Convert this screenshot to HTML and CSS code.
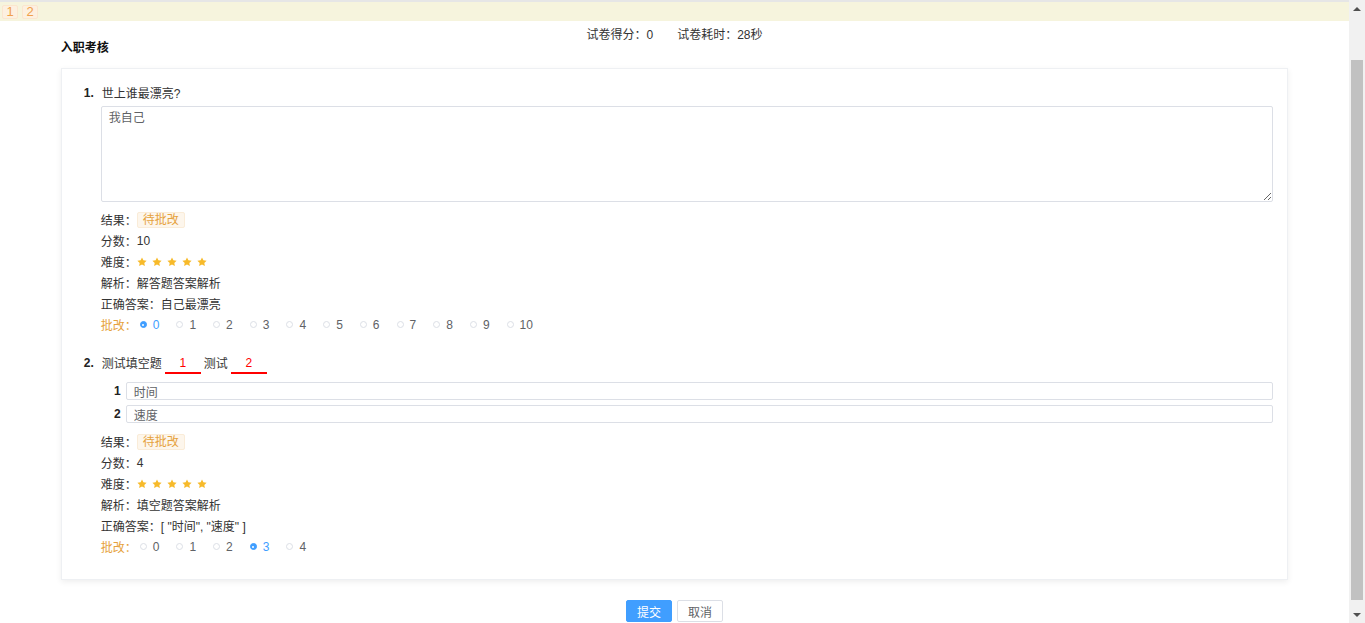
FILE: index.html
```html
<!DOCTYPE html>
<html lang="zh-CN">
<head>
<meta charset="utf-8">
<title>入职考核</title>
<link rel="stylesheet" href="styles.css">
</head>
<body>
<div class="page">
<div class="topbar">
  <span class="nav-badge">1</span>
  <span class="nav-badge">2</span>
</div>
<div class="score-line"><span class="score-item">试卷得分：0</span><span class="score-item">试卷耗时：28秒</span></div>
<div class="wrap">
  <div class="paper-title">入职考核</div>
  <div class="card">
    <div class="question">
      <div class="q-head"><span class="q-num">1.</span><span class="q-text">世上谁最漂亮?</span></div>
      <div class="q-body">
        <textarea class="answer-area" readonly>我自己</textarea>
        <div class="details">
          <div class="row"><span class="lbl">结果：</span><span class="tag">待批改</span></div>
          <div class="row"><span class="lbl">分数：</span>10</div>
          <div class="row"><span class="lbl">难度：</span><span class="stars">
            <svg class="star" viewBox="0 0 10 10"><path d="M5 0.4l1.4 2.9 3.2.4-2.3 2.2.6 3.2L5 7.6 2.1 9.1l.6-3.2L.4 3.7l3.2-.4z"/></svg>
            <svg class="star" viewBox="0 0 10 10"><path d="M5 0.4l1.4 2.9 3.2.4-2.3 2.2.6 3.2L5 7.6 2.1 9.1l.6-3.2L.4 3.7l3.2-.4z"/></svg>
            <svg class="star" viewBox="0 0 10 10"><path d="M5 0.4l1.4 2.9 3.2.4-2.3 2.2.6 3.2L5 7.6 2.1 9.1l.6-3.2L.4 3.7l3.2-.4z"/></svg>
            <svg class="star" viewBox="0 0 10 10"><path d="M5 0.4l1.4 2.9 3.2.4-2.3 2.2.6 3.2L5 7.6 2.1 9.1l.6-3.2L.4 3.7l3.2-.4z"/></svg>
            <svg class="star" viewBox="0 0 10 10"><path d="M5 0.4l1.4 2.9 3.2.4-2.3 2.2.6 3.2L5 7.6 2.1 9.1l.6-3.2L.4 3.7l3.2-.4z"/></svg>
          </span></div>
          <div class="row"><span class="lbl">解析：</span>解答题答案解析</div>
          <div class="row"><span class="lbl">正确答案：</span>自己最漂亮</div>
          <div class="row"><span class="lbl grade">批改：</span>
            <span class="radio checked"><i></i>0</span>
            <span class="radio"><i></i>1</span>
            <span class="radio"><i></i>2</span>
            <span class="radio"><i></i>3</span>
            <span class="radio"><i></i>4</span>
            <span class="radio"><i></i>5</span>
            <span class="radio"><i></i>6</span>
            <span class="radio"><i></i>7</span>
            <span class="radio"><i></i>8</span>
            <span class="radio"><i></i>9</span>
            <span class="radio"><i></i>10</span>
          </div>
        </div>
      </div>
    </div>

    <div class="question q2">
      <div class="q-head"><span class="q-num">2.</span><span class="q-text">测试填空题<span class="blank">1</span>测试<span class="blank">2</span></span></div>
      <div class="q-body">
        <div class="fill-row"><span class="fill-no">1</span><input class="fill-input" type="text" value="时间" readonly></div>
        <div class="fill-row"><span class="fill-no">2</span><input class="fill-input" type="text" value="速度" readonly></div>
        <div class="details">
          <div class="row"><span class="lbl">结果：</span><span class="tag">待批改</span></div>
          <div class="row"><span class="lbl">分数：</span>4</div>
          <div class="row"><span class="lbl">难度：</span><span class="stars">
            <svg class="star" viewBox="0 0 10 10"><path d="M5 0.4l1.4 2.9 3.2.4-2.3 2.2.6 3.2L5 7.6 2.1 9.1l.6-3.2L.4 3.7l3.2-.4z"/></svg>
            <svg class="star" viewBox="0 0 10 10"><path d="M5 0.4l1.4 2.9 3.2.4-2.3 2.2.6 3.2L5 7.6 2.1 9.1l.6-3.2L.4 3.7l3.2-.4z"/></svg>
            <svg class="star" viewBox="0 0 10 10"><path d="M5 0.4l1.4 2.9 3.2.4-2.3 2.2.6 3.2L5 7.6 2.1 9.1l.6-3.2L.4 3.7l3.2-.4z"/></svg>
            <svg class="star" viewBox="0 0 10 10"><path d="M5 0.4l1.4 2.9 3.2.4-2.3 2.2.6 3.2L5 7.6 2.1 9.1l.6-3.2L.4 3.7l3.2-.4z"/></svg>
            <svg class="star" viewBox="0 0 10 10"><path d="M5 0.4l1.4 2.9 3.2.4-2.3 2.2.6 3.2L5 7.6 2.1 9.1l.6-3.2L.4 3.7l3.2-.4z"/></svg>
          </span></div>
          <div class="row"><span class="lbl">解析：</span>填空题答案解析</div>
          <div class="row"><span class="lbl">正确答案：</span>[ "时间", "速度" ]</div>
          <div class="row"><span class="lbl grade">批改：</span>
            <span class="radio"><i></i>0</span>
            <span class="radio"><i></i>1</span>
            <span class="radio"><i></i>2</span>
            <span class="radio checked"><i></i>3</span>
            <span class="radio"><i></i>4</span>
          </div>
        </div>
      </div>
    </div>
  </div>
  <div class="actions">
    <button class="btn btn-primary" type="button">提交</button>
    <button class="btn" type="button">取消</button>
  </div>
</div>
</div>
<div class="scrollbar" aria-hidden="true">
  <span class="sb-arrow sb-up"></span>
  <span class="sb-track"><span class="sb-thumb"></span></span>
  <span class="sb-arrow sb-down"></span>
</div>
</body>
</html>
```

FILE: styles.css
```css
html, body {
  margin: 0;
  padding: 0;
}
body {
  font-family: "Liberation Sans", "Noto Sans CJK SC", sans-serif;
  font-size: 12px;
  color: #333;
  background: #fff;
  overflow: hidden;
}
.page {
  margin-right: 16px;
}
.topbar {
  height: 19px;
  border-top: 2px solid #e6e6e6;
  background: #f6f4dd;
  display: flex;
  align-items: center;
  gap: 4px;
  padding-left: 2px;
}
.nav-badge {
  width: 14px;
  height: 12px;
  line-height: 12px;
  text-align: center;
  font-size: 13px;
  color: #f0a04b;
  background: #fdf0e0;
  border: 1px solid #fbe6cf;
  border-radius: 2px;
}
.score-line {
  margin-top: 7px;
  line-height: 14px;
  text-align: center;
  color: #333;
}
.score-item + .score-item {
  margin-left: 24px;
}
.wrap {
  width: 91%;
  margin: 0 auto;
}
.paper-title {
  font-weight: bold;
  line-height: 12px;
  color: #111;
}
.card {
  margin-top: 14px;
  background: #fff;
  border: 1px solid #eef0f3;
  box-shadow: 0 2px 6px rgba(0, 0, 0, 0.07);
  padding: 15px 14px 22px 22px;
}
.question + .question {
  margin-top: 19px;
}
.q-head {
  display: flex;
  align-items: flex-start;
  line-height: 20px;
}
.q-num {
  width: 17px;
  flex: none;
  font-weight: bold;
  color: #222;
  line-height: 18px;
}
.q-text {
  padding-left: 1px;
  color: #333;
}
.q-body {
  margin-left: 17px;
}
.answer-area {
  display: block;
  box-sizing: border-box;
  width: 100%;
  height: 96px;
  margin-top: 2px;
  padding: 2px 7px;
  border: 1px solid #dcdfe6;
  border-radius: 2px;
  font-family: inherit;
  font-size: 12px;
  line-height: 18px;
  color: #606266;
  outline: none;
}
.details {
  margin-top: 7px;
}
.row {
  display: flex;
  align-items: center;
  height: 21px;
  color: #333;
}
.tag {
  display: inline-block;
  height: 14px;
  line-height: 14px;
  padding: 0 5px;
  color: #e6a23c;
  background: #fdf6ec;
  border: 1px solid #faecd8;
  border-radius: 2px;
}
.stars {
  display: flex;
  align-items: center;
}
.star {
  width: 10px;
  height: 10px;
  margin-right: 5px;
  fill: #f7ba2a;
}
.grade {
  color: #e6a23c;
  margin-right: 3px;
}
.radio {
  display: inline-flex;
  align-items: center;
  margin-right: 17px;
  color: #606266;
}
.radio i {
  box-sizing: border-box;
  width: 7px;
  height: 7px;
  margin-right: 6px;
  border: 1px solid #dcdfe6;
  border-radius: 50%;
  background: #fff;
  position: relative;
}
.radio.checked {
  color: #409eff;
}
.radio.checked i {
  border-color: #409eff;
  background: #409eff;
}
.radio.checked i::after {
  content: "";
  position: absolute;
  left: 1.5px;
  top: 1.5px;
  width: 2px;
  height: 2px;
  border-radius: 50%;
  background: #fff;
}
.blank {
  display: inline-block;
  width: 36px;
  margin: 0 3px;
  line-height: 18px;
  text-align: center;
  color: #f00;
  border-bottom: 2px solid #f00;
  vertical-align: top;
}
.fill-row {
  display: flex;
  align-items: center;
  margin-top: 5px;
}
.q2 .q-body > .fill-row:first-child {
  margin-top: 8px;
}
.fill-no {
  flex: none;
  text-align: right;
  padding-right: 5px;
  box-sizing: border-box;
  width: 25px;
  font-weight: bold;
  color: #222;
}
.fill-input {
  flex: 1;
  box-sizing: border-box;
  height: 18px;
  padding: 0 7px;
  border: 1px solid #dcdfe6;
  border-radius: 2px;
  font-family: inherit;
  font-size: 12px;
  color: #606266;
  outline: none;
}
.q2 .details {
  margin-top: 8px;
}
.actions {
  display: flex;
  justify-content: center;
  gap: 5px;
  margin-top: 20px;
}
.btn {
  height: 22px;
  padding: 0 10px;
  font-family: inherit;
  font-size: 12px;
  color: #606266;
  background: #fff;
  border: 1px solid #dcdfe6;
  border-radius: 2px;
}
.btn-primary {
  color: #fff;
  background: #409eff;
  border-color: #409eff;
}
.scrollbar {
  position: fixed;
  top: 0;
  right: 0;
  bottom: 0;
  width: 16px;
  background: #f1f1f1;
  display: flex;
  flex-direction: column;
}
.sb-arrow {
  height: 17px;
  flex: none;
  display: flex;
  align-items: center;
  justify-content: center;
}
.sb-arrow::before {
  content: "";
  width: 0;
  height: 0;
  border-left: 4px solid transparent;
  border-right: 4px solid transparent;
}
.sb-up::before {
  border-bottom: 4px solid #505050;
}
.sb-down::before {
  border-top: 4px solid #505050;
}
.sb-track {
  flex: 1;
  padding: 43px 2px 0;
}
.sb-thumb {
  display: block;
  height: 540px;
  background: #c1c1c1;
}
```
